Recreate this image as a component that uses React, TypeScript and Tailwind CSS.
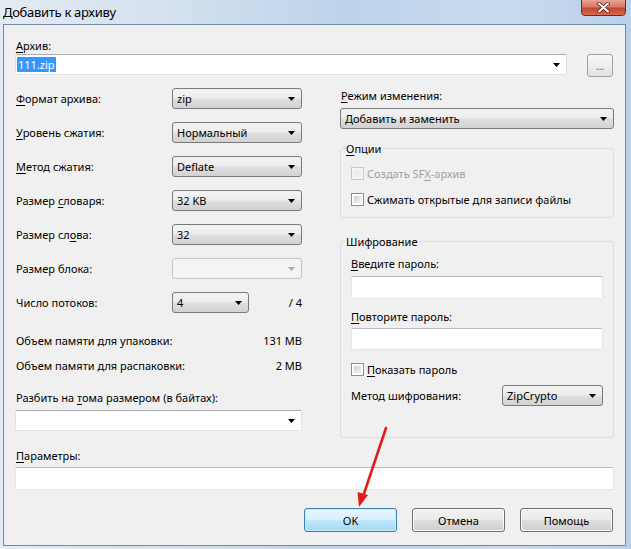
import React from "react";
import clsx from "clsx";

// Win7-style "add to archive" dialog

const Acc = ({ children }: { children: React.ReactNode }) => (
  <span className="underline decoration-1 underline-offset-[2px]">{children}</span>
);

const Arrow = ({ disabled }: { disabled?: boolean }) => (
  <svg width="7" height="4" viewBox="0 0 7 4" className="shrink-0">
    <path d="M0 0h7L3.5 4z" fill={disabled ? "#a7a7a7" : "#000"} />
  </svg>
);

type ComboProps = {
  value?: string;
  className?: string;
  disabled?: boolean;
};

// read-only dropdown, drawn like a button
const Combo = ({ value, className, disabled }: ComboProps) => (
  <div
    className={clsx(
      "flex h-[21px] items-center justify-between rounded-[3px] border pl-[4px] pr-[6px]",
      disabled
        ? "border-[#c3c6c8] bg-[#f4f4f4]"
        : "border-[#7a7a7a] bg-[linear-gradient(#f4f4f4_0%,#ececec_48%,#dfdfdf_52%,#d2d2d2_100%)]",
      className
    )}
  >
    <span>{value}</span>
    <Arrow disabled={disabled} />
  </div>
);

// editable dropdown, white field
const EditCombo = ({ children, className }: { children?: React.ReactNode; className?: string }) => (
  <div
    className={clsx(
      "flex h-[21px] items-center justify-between rounded-[2px] border border-[#dfe3e8] border-t-[#abadb3] bg-white pl-[1px] pr-[6px]",
      className
    )}
  >
    <div className="flex items-center">{children}</div>
    <Arrow />
  </div>
);

const TextBox = ({ className }: { className?: string }) => (
  <div
    className={clsx(
      "rounded-[2px] border border-[#e2e5ea] border-t-[#b8bcc2] bg-white",
      className
    )}
  />
);

const Check = ({ disabled, children }: { disabled?: boolean; children: React.ReactNode }) => (
  <div className={clsx("flex h-[15px] items-center gap-[3px]", disabled && "text-[#a0a0a0]")}>
    <div
      className={clsx(
        "h-[13px] w-[13px] border p-[2px]",
        disabled ? "border-[#c9c9c9] bg-[#f4f4f4]" : "border-[#8e8f8f] bg-white"
      )}
    >
      <div
        className={clsx(
          "h-full w-full",
          disabled
            ? "bg-[#eeeeee]"
            : "bg-[linear-gradient(135deg,#cbcfd5,#f4f4f4)]"
        )}
      />
    </div>
    <span>{children}</span>
  </div>
);

const Button = ({ children, primary }: { children: React.ReactNode; primary?: boolean }) => (
  <div
    className={clsx(
      "flex h-[24px] w-[93px] items-center justify-center rounded-[3px] border",
      primary
        ? "border-[#3c7fb1] bg-[linear-gradient(#eaf6fd_0%,#d9f0fc_48%,#bee6fd_52%,#a7d9f5_100%)] shadow-[inset_0_0_0_1px_#c9ecfd]"
        : "border-[#707070] bg-[linear-gradient(#f2f2f2_0%,#ebebeb_48%,#dddddd_52%,#cfcfcf_100%)] shadow-[inset_0_0_0_1px_#fbfbfb]"
    )}
  >
    {children}
  </div>
);

const Row = ({ label, children }: { label: React.ReactNode; children: React.ReactNode }) => (
  <div className="flex h-[21px] items-center">
    <span className="w-[157px] pl-[1px]">{label}</span>
    {children}
  </div>
);

const Group = ({ title, className, children }: { title: React.ReactNode; className?: string; children: React.ReactNode }) => (
  <fieldset className={clsx("rounded-[3px] border border-[#d5dfe5] px-[10px]", className)}>
    <legend className="-ml-[6px] px-[1px] leading-[15px]">{title}</legend>
    {children}
  </fieldset>
);

export default function App() {
  return (
    <div className="relative h-[549px] w-[631px] overflow-hidden bg-[linear-gradient(90deg,#e4ebf3_0%,#d3e0ee_28%,#bcd3ea_55%,#c8dbef_80%,#b9d0e9_100%)] pl-[3px] pr-[5px] font-['Noto_Sans',sans-serif] text-[11px] leading-[15px] text-black">
      {/* title bar */}
      <div className="-ml-[3px] -mr-[5px] flex h-[24px] items-start justify-between">
        <span className="ml-[3px] mt-[3px] text-[13px] leading-[18px] tracking-[-0.3px]">Добавить к архиву</span>
        <div className="mr-[5px] -mt-[1px] flex h-[17px] w-[45px] items-center justify-center rounded-b-[4px] border border-[#6b2a22] bg-[linear-gradient(#e8a493_0%,#d47a64_45%,#c4462f_55%,#d7694c_100%)]">
          <svg width="13" height="11" viewBox="0 0 13 11">
            <path d="M2 1.5l9 8M11 1.5l-9 8" stroke="#5a1a10" strokeWidth="3.6" strokeLinecap="round" />
            <path d="M2 1.5l9 8M11 1.5l-9 8" stroke="#fff" strokeWidth="2" strokeLinecap="round" />
          </svg>
        </div>
      </div>

      {/* client area */}
      <div className="border border-[#7489a4] bg-[#f0f0f0] px-[11px] pb-[13px] pt-[13px]">
        <div className="pl-[1px]">
          <Acc>А</Acc>рхив:
        </div>
        <div className="mt-[1px] flex items-start gap-[20px]">
          <EditCombo className="flex-1">
            <span className="bg-[#3399ff] px-[1px] text-white">111.zip</span>
          </EditCombo>
          <div className="mr-[1px] flex h-[23px] w-[26px] items-center justify-center rounded-[3px] border border-[#a0a0a0] bg-[linear-gradient(#f7f7f7,#e3e3e3)] text-[10px] leading-[10px] text-[#555]">
            ...
          </div>
        </div>

        <div className="mt-[11px] grid grid-cols-[287px_274px] gap-x-[38px]">
          {/* left column */}
          <div className="flex flex-col">
            <div className="flex flex-col gap-[13px]">
              <Row label={<><Acc>Ф</Acc>ормат архива:</>}>
                <Combo value="zip" className="w-[130px]" />
              </Row>
              <Row label={<><Acc>У</Acc>ровень сжатия:</>}>
                <Combo value="Нормальный" className="w-[130px]" />
              </Row>
              <Row label={<><Acc>М</Acc>етод сжатия:</>}>
                <Combo value="Deflate" className="w-[130px]" />
              </Row>
              <Row label={<>Размер <Acc>с</Acc>ловаря:</>}>
                <Combo value="32 KB" className="w-[130px]" />
              </Row>
              <Row label={<>Размер сл<Acc>о</Acc>ва:</>}>
                <Combo value="32" className="w-[130px]" />
              </Row>
              <Row label="Размер блока:">
                <Combo disabled className="w-[130px]" />
              </Row>
              <Row label="Число потоков:">
                <Combo value="4" className="w-[77px]" />
                <span className="ml-auto">/ 4</span>
              </Row>
            </div>
            <div className="mt-[20px] flex justify-between pl-[1px]">
              <span>Объем памяти для упаковки:</span>
              <span>131 MB</span>
            </div>
            <div className="mt-[10px] flex justify-between pl-[1px]">
              <span>Объем памяти для распаковки:</span>
              <span>2 MB</span>
            </div>
            <div className="mt-[17px] pl-[1px]">
              Разбить на <Acc>т</Acc>ома размером (в байтах):
            </div>
            <EditCombo className="mt-[5px]" />
          </div>

          {/* right column */}
          <div className="flex flex-col">
            <div className="pl-[1px]">
              <Acc>Р</Acc>ежим изменения:
            </div>
            <Combo value="Добавить и заменить" className="mt-[5px] h-[20px]" />

            <Group title={<><Acc>О</Acc>пции</>} className="mt-[12px] pb-[10px] pt-[10px]">
              <div className="flex flex-col gap-[11px]">
                <Check disabled>
                  Создать SF<Acc>X</Acc>-архив
                </Check>
                <Check>Сжимать открытые для записи файлы</Check>
              </div>
            </Group>

            <Group title="Шифрование" className="mt-[16px] pb-[31px] pt-[7px]">
              <div>
                <Acc>В</Acc>ведите пароль:
              </div>
              <TextBox className="mt-[5px] h-[23px]" />
              <div className="mt-[10px]">
                <Acc>П</Acc>овторите пароль:
              </div>
              <TextBox className="mt-[4px] h-[22px]" />
              <div className="mt-[12px]">
                <Check>
                  <Acc>П</Acc>оказать пароль
                </Check>
              </div>
              <div className="mt-[8px] flex h-[21px] items-center justify-between">
                <span>Метод шифрования:</span>
                <Combo value="ZipCrypto" className="w-[101px]" />
              </div>
            </Group>
          </div>
        </div>

        <div className="mt-[10px] pl-[1px]">
          <Acc>П</Acc>араметры:
        </div>
        <TextBox className="mt-[4px] h-[23px]" />

        <div className="mr-[1px] mt-[18px] flex justify-end gap-[15px]">
          <Button primary>OK</Button>
          <Button>Отмена</Button>
          <Button>Помощь</Button>
        </div>
      </div>

      {/* red pointer drawn over the dialog */}
      <svg className="pointer-events-none absolute left-0 top-0" width="631" height="549">
        <line x1="386" y1="428" x2="362.5" y2="498" stroke="#e01d1d" strokeWidth="2.6" strokeLinecap="round" />
        <polygon points="359,507 368,495 357.5,492" fill="#e01d1d" />
      </svg>
    </div>
  );
}
